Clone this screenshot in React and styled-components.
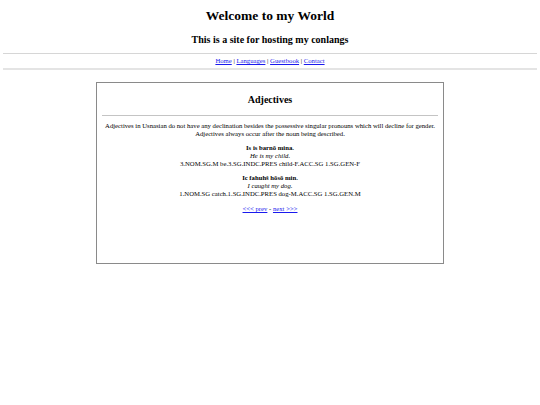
import React from "react"
import styled, { createGlobalStyle } from "styled-components"

const GlobalStyle = createGlobalStyle`
  body {
    margin: 4px 3px;
    background: #fff;
    color: #000;
    font-family: "Liberation Serif", "Times New Roman", serif;
    font-size: 6.7px;
  }
`

const Header = styled.header`
  text-align: center;
`

const Title = styled.h1`
  font-size: 13.5px;
  margin: 3px 0 0;
  line-height: 18px;
`

const Subtitle = styled.h2`
  font-size: 10px;
  margin: 9px 0 0;
  line-height: 12px;
`

const Rule = styled.hr`
  border: none;
  height: ${p => p.$size || 1}px;
  background: ${p => p.$color || "#d6d6d6"};
  margin: ${p => p.$margin || "0"};
`

const Nav = styled.nav`
  text-align: center;
  line-height: 8px;
  padding: 3px 0;
`

const Link = styled.a`
  color: #1a1aee;
  text-decoration: underline;
`

const Panel = styled.main`
  width: 336px;
  min-height: 180px;
  margin: 12px auto 0;
  border: 1px solid #8a8a8a;
  padding: 0 5px;
  text-align: center;
  line-height: 8px;
`

const PanelTitle = styled.h3`
  font-size: 10px;
  line-height: 12px;
  margin: 11px 0 9px;
`

const Text = styled.p`
  margin: 6px 0 0;
`

const Example = styled.div`
  margin-top: 6px;
`

const Sentence = styled.div`
  font-weight: bold;
`

const Gloss = styled.div`
  font-style: italic;
`

const Pager = styled.div`
  margin-top: 7px;
`

const examples = [
  {
    text: "Is is barnō mina.",
    gloss: "He is my child.",
    parse: "3.NOM.SG.M be.3.SG.INDC.PRES child-F.ACC.SG 1.SG.GEN-F"
  },
  {
    text: "Ic fahuhš hōsō min.",
    gloss: "I caught my dog.",
    parse: "1.NOM.SG catch.1.SG.INDC.PRES dog-M.ACC.SG 1.SG.GEN.M"
  }
]

const App = () => (
  <>
    <GlobalStyle />
    <Header>
      <Title>Welcome to my World</Title>
      <Subtitle>This is a site for hosting my conlangs</Subtitle>
    </Header>
    <Rule $margin="7px 0 0" />
    <Nav>
      <Link href="#">Home</Link> | <Link href="#">Languages</Link> |{" "}
      <Link href="#">Guestbook</Link> | <Link href="#">Contact</Link>
    </Nav>
    <Rule $size={2} $color="#e4e4e4" />
    <Panel>
      <PanelTitle>Adjectives</PanelTitle>
      <Rule $color="#c4c4c4" />
      <Text>
        Adjectives in Usnasian do not have any declination besides the possessive singular pronouns which will
        decline for gender. Adjectives always occur after the noun being described.
      </Text>
      {examples.map(ex => (
        <Example key={ex.text}>
          <Sentence>{ex.text}</Sentence>
          <Gloss>{ex.gloss}</Gloss>
          <div>{ex.parse}</div>
        </Example>
      ))}
      <Pager>
        <Link href="#">&lt;&lt;&lt; prev</Link> - <Link href="#">next &gt;&gt;&gt;</Link>
      </Pager>
    </Panel>
  </>
)

export default App
